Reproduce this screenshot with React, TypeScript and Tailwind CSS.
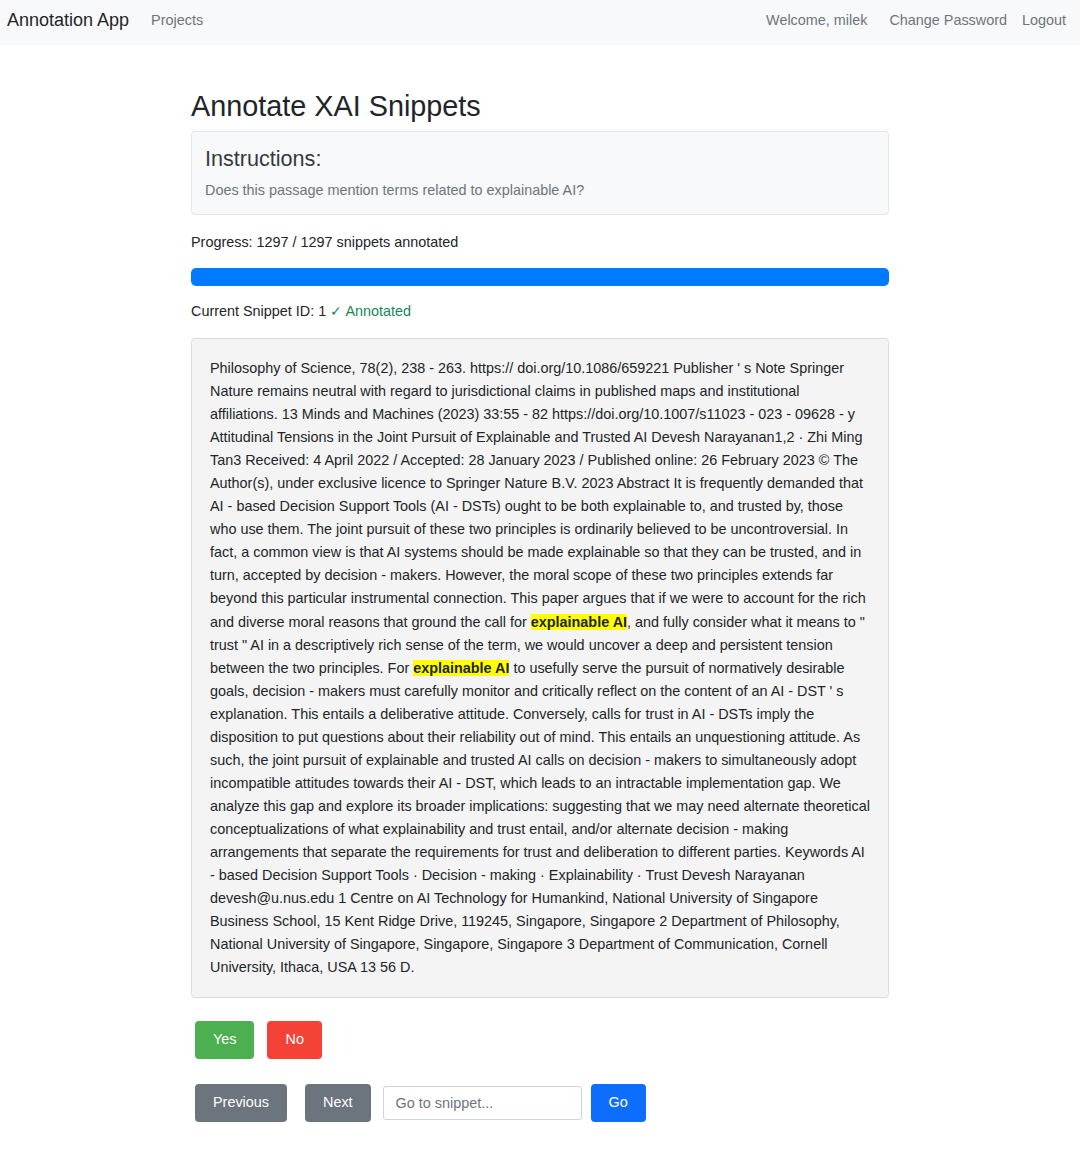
const SNIPPET_BEFORE =
  "Philosophy of Science, 78(2), 238 - 263. https:// doi.org/10.1086/659221 Publisher ' s Note Springer Nature remains neutral with regard to jurisdictional claims in published maps and institutional affiliations. 13 Minds and Machines (2023) 33:55 - 82 https://doi.org/10.1007/s11023 - 023 - 09628 - y Attitudinal Tensions in the Joint Pursuit of Explainable and Trusted AI Devesh Narayanan1,2 · Zhi Ming Tan3 Received: 4 April 2022 / Accepted: 28 January 2023 / Published online: 26 February 2023 © The Author(s), under exclusive licence to Springer Nature B.V. 2023 Abstract It is frequently demanded that AI - based Decision Support Tools (AI - DSTs) ought to be both explainable to, and trusted by, those who use them. The joint pursuit of these two principles is ordinarily believed to be uncontroversial. In fact, a common view is that AI systems should be made explainable so that they can be trusted, and in turn, accepted by decision - makers. However, the moral scope of these two principles extends far beyond this particular instrumental connection. This paper argues that if we were to account for the rich and diverse moral reasons that ground the call for ";
const SNIPPET_MIDDLE =
  ', and fully consider what it means to " trust " AI in a descriptively rich sense of the term, we would uncover a deep and persistent tension between the two principles. For ';
const SNIPPET_AFTER =
  " to usefully serve the pursuit of normatively desirable goals, decision - makers must carefully monitor and critically reflect on the content of an AI - DST ' s explanation. This entails a deliberative attitude. Conversely, calls for trust in AI - DSTs imply the disposition to put questions about their reliability out of mind. This entails an unquestioning attitude. As such, the joint pursuit of explainable and trusted AI calls on decision - makers to simultaneously adopt incompatible attitudes towards their AI - DST, which leads to an intractable implementation gap. We analyze this gap and explore its broader implications: suggesting that we may need alternate theoretical conceptualizations of what explainability and trust entail, and/or alternate decision - making arrangements that separate the requirements for trust and deliberation to different parties. Keywords AI - based Decision Support Tools · Decision - making · Explainability · Trust Devesh Narayanan devesh@u.nus.edu 1 Centre on AI Technology for Humankind, National University of Singapore Business School, 15 Kent Ridge Drive, 119245, Singapore, Singapore 2 Department of Philosophy, National University of Singapore, Singapore, Singapore 3 Department of Communication, Cornell University, Ithaca, USA 13 56 D.";

const Mark = ({ children }: { children: React.ReactNode }) => (
  <mark className="bg-[#ffff00] font-bold text-[#212529]">{children}</mark>
);

const Navbar = () => {
  return (
    <nav className="h-[45px] bg-[#f8f9fa] flex items-center justify-between px-[7px] pb-[4px]">
      <div className="flex items-center">
        <span className="text-[18px] text-[#212529]">Annotation App</span>
        <a className="ml-[22px] text-[14.4px] text-[#6c757d]">Projects</a>
      </div>
      <div className="flex items-center text-[14.4px] text-[#6c757d] pr-[7px]">
        <span>Welcome, milek</span>
        <a className="ml-[22px]">Change Password</a>
        <a className="ml-[15px]">Logout</a>
      </div>
    </nav>
  );
};

const btn = "h-[38px] px-[18px] rounded-[4px] text-white text-[14.4px]";

const App = () => {
  return (
    <div
      className="min-h-[1157px] bg-white text-[#212529]"
      style={{ fontFamily: '"Liberation Sans", Arial, sans-serif' }}
    >
      <Navbar />
      <main className="w-[698px] mx-auto pt-[44px]">
        <h1 className="text-[28.8px] leading-[34px] mb-[8px]">
          Annotate XAI Snippets
        </h1>

        <div className="bg-[#f8f9fa] border border-[#e4e6e8] rounded-[4px] px-[13px] pt-[14px] pb-[14px]">
          <h2 className="text-[21.6px] leading-[26px] text-[#343a40]">
            Instructions:
          </h2>
          <p className="mt-[8px] text-[14.4px] leading-[20px] text-[#6c757d]">
            Does this passage mention terms related to explainable AI?
          </p>
        </div>

        <p className="mt-[17px] text-[14.4px] leading-[20px]">
          Progress: 1297 / 1297 snippets annotated
        </p>

        <div className="mt-[16px] h-[18px] rounded-[5px] bg-[#e9ecef] overflow-hidden">
          <div className="h-full bg-[#007bff]" style={{ width: "100%" }} />
        </div>

        <p className="mt-[15px] text-[14.4px] leading-[20px]">
          Current Snippet ID: 1{" "}
          <span className="text-[#198754]">✓ Annotated</span>
        </p>

        <div className="mt-[17px] bg-[#f4f4f4] border border-[#dcdcdc] rounded-[4px] px-[18px] pt-[18px] pb-[8px]">
          <p className="text-[14.4px] leading-[1.6] mb-[10px]">
            {SNIPPET_BEFORE}
            <Mark>explainable AI</Mark>
            {SNIPPET_MIDDLE}
            <Mark>explainable AI</Mark>
            {SNIPPET_AFTER}
          </p>
        </div>

        <div className="flex mt-[23px] ml-[4px] gap-[13px]">
          <button className={`${btn} bg-[#4caf50]`}>Yes</button>
          <button className={`${btn} bg-[#f44336]`}>No</button>
        </div>

        <div className="flex items-center mt-[25px] ml-[4px]">
          <button className={`${btn} bg-[#6c757d]`}>Previous</button>
          <button className={`${btn} ml-[18px] bg-[#6c757d]`}>Next</button>
          <input
            type="text"
            placeholder="Go to snippet..."
            className="ml-[12px] w-[199px] h-[34px] px-[12px] border border-[#ced4da] rounded-[3px] text-[14.4px] text-[#212529] placeholder:text-[#6c757d] outline-none"
          />
          <button className={`${btn} ml-[9px] bg-[#0d6efd]`}>Go</button>
        </div>
      </main>
    </div>
  );
};

export default App;
